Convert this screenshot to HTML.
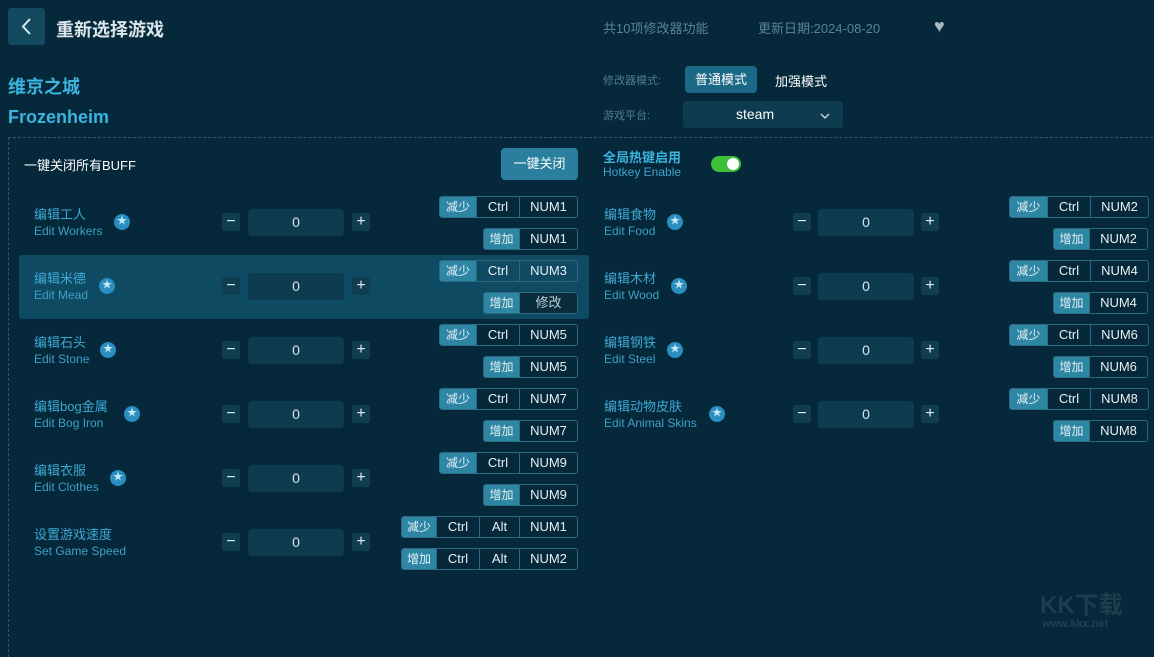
<!DOCTYPE html>
<html><head><meta charset="utf-8"><style>
*{margin:0;padding:0;box-sizing:border-box}
body{width:1154px;height:633px;background:#05283a;font-family:"Liberation Sans","Noto Sans CJK SC",sans-serif;position:relative;overflow:hidden;color:#fff}
.a{position:absolute;white-space:nowrap}
.back{left:8px;top:8px;width:37px;height:37px;background:#134a5f;border-radius:3px}
.dash{left:8px;top:137px;width:1160px;height:520px;border-left:1px dashed #2a5a6c;border-top:1px dashed #2a5a6c}
.zh{font-size:13px;color:#3fa8d4}
.en{font-size:12px;color:#3fa0c8}
.star{width:16px;height:16px;border-radius:50%;background:#2a8fbe;color:#bfe8f8;font-size:10px;line-height:16px;text-align:center}
.pm{width:18px;height:18px;background:#113d50;border-radius:2px;color:#dfe9ee;font-size:16px;line-height:17px;text-align:center}
.inp{width:96px;height:27px;background:#0e3b4f;border-radius:4px;color:#dde8ec;font-size:14px;line-height:27px;text-align:center}
.kg{height:22px;display:flex;border:1px solid #2c6a82;border-radius:3px;overflow:hidden;font-size:13px}
.kg span{display:block;height:20px;line-height:20px;text-align:center;color:#e8f0f4;border-left:1px solid #2c6a82}
.kg span.l{background:#2d86a4;border-left:none;font-size:12px}
.hl{left:19px;top:255px;width:570px;height:64px;background:#0e4a62;border-radius:3px}
</style></head><body>
<div class="a hl"></div>
<div class="a back"><svg width="37" height="37"><path d="M22 11 L15 18.5 L22 26" stroke="#e0eaee" stroke-width="2" fill="none"/></svg></div>
<div class="a" style="left:56px;top:16px;font-size:18px;font-weight:bold;color:#dce6ea">重新选择游戏</div>
<div class="a" style="left:603px;top:18px;font-size:13px;color:#56849a">共10项修改器功能</div>
<div class="a" style="left:758px;top:18px;font-size:13px;color:#56849a">更新日期:2024-08-20</div>
<div class="a" style="left:934px;top:16px;font-size:18px;color:#a9b8c0">♥</div>
<div class="a" style="left:8px;top:73px;font-size:18px;font-weight:bold;color:#3cb4e0">维京之城</div>
<div class="a" style="left:8px;top:107px;font-size:18px;font-weight:bold;color:#3cb4e0">Frozenheim</div>
<div class="a" style="left:603px;top:72px;font-size:11px;color:#4f7d90">修改器模式:</div>
<div class="a" style="left:685px;top:66px;width:72px;height:27px;background:#1b6986;border-radius:4px;font-size:13px;line-height:27px;text-align:center;color:#fff">普通模式</div>
<div class="a" style="left:775px;top:71px;font-size:13px;color:#fff">加强模式</div>
<div class="a" style="left:603px;top:107px;font-size:11px;color:#4f7d90">游戏平台:</div>
<div class="a" style="left:683px;top:101px;width:160px;height:27px;background:#0e3b4f;border-radius:3px;font-size:14px;line-height:27px;color:#fff"><span style="position:absolute;left:53px">steam</span><svg style="position:absolute;left:137px;top:12px" width="10" height="7"><path d="M1 1 L5 5 L9 1" stroke="#cfe0e6" stroke-width="1.3" fill="none"/></svg></div>
<div class="a dash"></div>
<div class="a" style="left:24px;top:155px;font-size:13px;color:#fff">一键关闭所有BUFF</div>
<div class="a" style="left:501px;top:148px;width:77px;height:32px;background:#2a7f9e;border-radius:4px;font-size:13px;line-height:32px;text-align:center;color:#fff">一键关闭</div>
<div class="a" style="left:603px;top:147px;font-size:13px;font-weight:bold;color:#3cb4e0">全局热键启用</div>
<div class="a" style="left:603px;top:165px;font-size:12px;color:#3ca4cc">Hotkey Enable</div>
<div class="a" style="left:711px;top:156px;width:30px;height:16px;border-radius:8px;background:#3dbf3a"><div style="position:absolute;right:2px;top:2px;width:12px;height:12px;border-radius:50%;background:#fff"></div></div>

<div class="a zh" style="left:34px;top:204px">编辑工人</div><div class="a en" style="left:34px;top:224px">Edit Workers</div><div class="a star" style="left:114px;top:214px">★</div>
<div class="a zh" style="left:34px;top:268px">编辑米德</div><div class="a en" style="left:34px;top:288px">Edit Mead</div><div class="a star" style="left:99px;top:278px">★</div>
<div class="a zh" style="left:34px;top:332px">编辑石头</div><div class="a en" style="left:34px;top:352px">Edit Stone</div><div class="a star" style="left:100px;top:342px">★</div>
<div class="a zh" style="left:34px;top:396px">编辑bog金属</div><div class="a en" style="left:34px;top:416px">Edit Bog Iron</div><div class="a star" style="left:124px;top:406px">★</div>
<div class="a zh" style="left:34px;top:460px">编辑衣服</div><div class="a en" style="left:34px;top:480px">Edit Clothes</div><div class="a star" style="left:110px;top:470px">★</div>
<div class="a zh" style="left:34px;top:524px">设置游戏速度</div><div class="a en" style="left:34px;top:544px">Set Game Speed</div>

<div class="a pm" style="left:222px;top:213px">−</div><div class="a inp" style="left:248px;top:209px">0</div><div class="a pm" style="left:352px;top:213px">+</div>
<div class="a pm" style="left:222px;top:277px">−</div><div class="a inp" style="left:248px;top:273px">0</div><div class="a pm" style="left:352px;top:277px">+</div>
<div class="a pm" style="left:222px;top:341px">−</div><div class="a inp" style="left:248px;top:337px">0</div><div class="a pm" style="left:352px;top:341px">+</div>
<div class="a pm" style="left:222px;top:405px">−</div><div class="a inp" style="left:248px;top:401px">0</div><div class="a pm" style="left:352px;top:405px">+</div>
<div class="a pm" style="left:222px;top:469px">−</div><div class="a inp" style="left:248px;top:465px">0</div><div class="a pm" style="left:352px;top:469px">+</div>
<div class="a pm" style="left:222px;top:533px">−</div><div class="a inp" style="left:248px;top:529px">0</div><div class="a pm" style="left:352px;top:533px">+</div>

<div class="a kg" style="left:439px;top:196px"><span class="l" style="width:36px">减少</span><span style="width:43px">Ctrl</span><span style="width:58px">NUM1</span></div>
<div class="a kg" style="left:483px;top:228px"><span class="l" style="width:35px">增加</span><span style="width:58px">NUM1</span></div>
<div class="a kg" style="left:439px;top:260px"><span class="l" style="width:36px">减少</span><span style="width:43px">Ctrl</span><span style="width:58px">NUM3</span></div>
<div class="a kg" style="left:483px;top:292px"><span class="l" style="width:35px">增加</span><span style="width:58px;background:#082c3c;color:#bcd0d8">修改</span></div>
<div class="a kg" style="left:439px;top:324px"><span class="l" style="width:36px">减少</span><span style="width:43px">Ctrl</span><span style="width:58px">NUM5</span></div>
<div class="a kg" style="left:483px;top:356px"><span class="l" style="width:35px">增加</span><span style="width:58px">NUM5</span></div>
<div class="a kg" style="left:439px;top:388px"><span class="l" style="width:36px">减少</span><span style="width:43px">Ctrl</span><span style="width:58px">NUM7</span></div>
<div class="a kg" style="left:483px;top:420px"><span class="l" style="width:35px">增加</span><span style="width:58px">NUM7</span></div>
<div class="a kg" style="left:439px;top:452px"><span class="l" style="width:36px">减少</span><span style="width:43px">Ctrl</span><span style="width:58px">NUM9</span></div>
<div class="a kg" style="left:483px;top:484px"><span class="l" style="width:35px">增加</span><span style="width:58px">NUM9</span></div>
<div class="a kg" style="left:401px;top:516px"><span class="l" style="width:34px">减少</span><span style="width:43px">Ctrl</span><span style="width:40px">Alt</span><span style="width:58px">NUM1</span></div>
<div class="a kg" style="left:401px;top:548px"><span class="l" style="width:34px">增加</span><span style="width:43px">Ctrl</span><span style="width:40px">Alt</span><span style="width:58px">NUM2</span></div>

<div class="a zh" style="left:604px;top:204px">编辑食物</div><div class="a en" style="left:604px;top:224px">Edit Food</div><div class="a star" style="left:667px;top:214px">★</div>
<div class="a zh" style="left:604px;top:268px">编辑木材</div><div class="a en" style="left:604px;top:288px">Edit Wood</div><div class="a star" style="left:671px;top:278px">★</div>
<div class="a zh" style="left:604px;top:332px">编辑钢铁</div><div class="a en" style="left:604px;top:352px">Edit Steel</div><div class="a star" style="left:667px;top:342px">★</div>
<div class="a zh" style="left:604px;top:396px">编辑动物皮肤</div><div class="a en" style="left:604px;top:416px">Edit Animal Skins</div><div class="a star" style="left:709px;top:406px">★</div>

<div class="a pm" style="left:793px;top:213px">−</div><div class="a inp" style="left:818px;top:209px">0</div><div class="a pm" style="left:921px;top:213px">+</div>
<div class="a pm" style="left:793px;top:277px">−</div><div class="a inp" style="left:818px;top:273px">0</div><div class="a pm" style="left:921px;top:277px">+</div>
<div class="a pm" style="left:793px;top:341px">−</div><div class="a inp" style="left:818px;top:337px">0</div><div class="a pm" style="left:921px;top:341px">+</div>
<div class="a pm" style="left:793px;top:405px">−</div><div class="a inp" style="left:818px;top:401px">0</div><div class="a pm" style="left:921px;top:405px">+</div>

<div class="a kg" style="left:1009px;top:196px"><span class="l" style="width:37px">减少</span><span style="width:43px">Ctrl</span><span style="width:58px">NUM2</span></div>
<div class="a kg" style="left:1053px;top:228px"><span class="l" style="width:35px">增加</span><span style="width:58px">NUM2</span></div>
<div class="a kg" style="left:1009px;top:260px"><span class="l" style="width:37px">减少</span><span style="width:43px">Ctrl</span><span style="width:58px">NUM4</span></div>
<div class="a kg" style="left:1053px;top:292px"><span class="l" style="width:35px">增加</span><span style="width:58px">NUM4</span></div>
<div class="a kg" style="left:1009px;top:324px"><span class="l" style="width:37px">减少</span><span style="width:43px">Ctrl</span><span style="width:58px">NUM6</span></div>
<div class="a kg" style="left:1053px;top:356px"><span class="l" style="width:35px">增加</span><span style="width:58px">NUM6</span></div>
<div class="a kg" style="left:1009px;top:388px"><span class="l" style="width:37px">减少</span><span style="width:43px">Ctrl</span><span style="width:58px">NUM8</span></div>
<div class="a kg" style="left:1053px;top:420px"><span class="l" style="width:35px">增加</span><span style="width:58px">NUM8</span></div>

<div class="a" style="left:1040px;top:585px;font-size:24px;font-weight:bold;color:#1b3f4e">KK下载</div>
<div class="a" style="left:1042px;top:618px;font-size:11px;font-weight:bold;color:#1e4352">www.kkx.net</div>
</body></html>
